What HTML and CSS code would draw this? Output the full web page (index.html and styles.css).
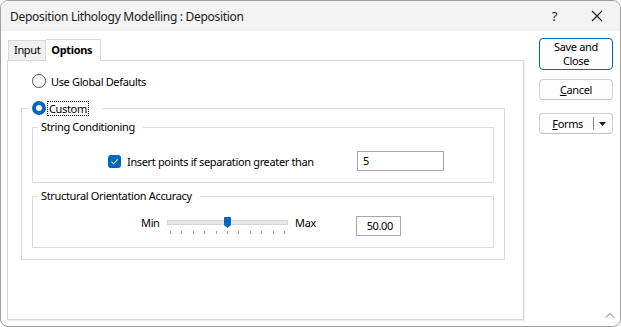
FILE: index.html
```html
<!DOCTYPE html>
<html lang="en">
<head>
  <meta charset="UTF-8">
  <title>Deposition Lithology Modelling : Deposition</title>
  <link rel="stylesheet" href="styles.css">
</head>
<body>
  <div class="window">
    <div class="titlebar">
      <span class="title">Deposition Lithology Modelling : Deposition</span>
      <span class="help">?</span>
      <svg class="close" width="12" height="12" viewBox="0 0 12 12">
        <path d="M1 1 L11 11 M11 1 L1 11" stroke="#1a1a1a" stroke-width="1.1" fill="none" />
      </svg>
    </div>

    <div class="client">
      <div class="form-area">
        <div class="tabs">
          <div class="tab">Input</div>
          <div class="tab active">Options</div>
        </div>

        <div class="panel">
          <label class="radio-row">
            <span class="radio"></span>
            <span>Use Global Defaults</span>
          </label>

          <fieldset class="group custom">
            <legend>
              <span class="radio checked"></span>
              <span class="focus">Custom</span>
            </legend>

            <fieldset class="group inner">
              <legend>String Conditioning</legend>
              <div class="row string-row">
                <label class="check-label">
                  <span class="checkbox">
                    <svg width="13" height="13" viewBox="0 0 13 13">
                      <path d="M3.5 6.8 L5.6 8.8 L9.6 4.4" stroke="#fff" stroke-width="1.1" fill="none" />
                    </svg>
                  </span>
                  <span>Insert points if separation greater than</span>
                </label>
                <div class="textbox wide">5</div>
              </div>
            </fieldset>

            <fieldset class="group inner struct">
              <legend>Structural Orientation Accuracy</legend>
              <div class="row slider-row">
                <span class="min-label">Min</span>
                <div class="slider">
                  <div class="track"></div>
                  <svg class="thumb" width="7" height="11" viewBox="0 0 7 11">
                    <path d="M0 1 Q0 0 1 0 H6 Q7 0 7 1 V8 L3.5 11 L0 8 Z" fill="#0067c0" />
                  </svg>
                  <div class="ticks">
                    <i></i><i></i><i></i><i></i><i></i><i></i><i></i><i></i><i></i><i></i><i></i>
                  </div>
                </div>
                <span class="max-label">Max</span>
                <div class="textbox small">50.00</div>
              </div>
            </fieldset>
          </fieldset>
        </div>
      </div>

      <div class="buttons">
        <button class="btn primary">Save and<br>Close</button>
        <button class="btn"><u>C</u>ancel</button>
        <button class="btn forms">
          <span class="forms-text"><u>F</u>orms</span>
          <span class="divider"></span>
          <svg width="7" height="4" viewBox="0 0 7 4"><path d="M0 0 H7 L3.5 4 Z" fill="#1a1a1a" /></svg>
        </button>
      </div>
    </div>

    <svg class="grip" width="10" height="6" viewBox="0 0 10 6">
      <path d="M1 5.5 L5 1.5 L9 5.5" stroke="#6a6a6a" stroke-width="1" fill="none" />
    </svg>
  </div>
</body>
</html>
```

FILE: styles.css
```css
* {
  box-sizing: border-box;
}
body {
  margin: 0;
  background: #fff;
  font-family: "Noto Sans", "Open Sans", sans-serif;
  font-size: 11px;
  letter-spacing: -0.35px;
  color: #000;
}
.window {
  position: relative;
  width: 621px;
  height: 327px;
  border: 1px solid #a0a0a0;
  border-radius: 8px;
  overflow: hidden;
  display: flex;
  flex-direction: column;
  background: #fff;
}
.titlebar {
  height: 30px;
  background: #f3f3f3;
  display: flex;
  align-items: center;
  padding-left: 9px;
  flex-shrink: 0;
}
.title {
  flex: 1;
  font-size: 12px;
  letter-spacing: -0.3px;
  color: #1a1a1a;
}
.help {
  font-size: 13px;
  margin-right: 34px;
  color: #1a1a1a;
}
.close {
  margin-right: 17px;
}
.client {
  display: flex;
  padding-left: 6px;
  flex: 1;
}
.form-area {
  width: 518px;
  padding-top: 7px;
}
.tabs {
  display: flex;
  align-items: flex-end;
  padding-left: 1px;
  height: 22px;
}
.tab {
  height: 20px;
  padding: 0 5px;
  line-height: 18px;
  background: #f0f0f0;
  border: 1px solid #d9d9d9;
  border-bottom: none;
}
.tab.active {
  height: 22px;
  padding: 0 8px 0 5px;
  font-weight: bold;
  background: #fff;
  border-left: none;
  line-height: 20px;
  margin-bottom: -1px;
  position: relative;
}
.panel {
  width: 517px;
  height: 260px;
  border: 1px solid #d9d9d9;
  box-shadow: 1px 1px 0 #ececec;
  padding-top: 12px;
}
.radio-row {
  display: flex;
  align-items: center;
  height: 16px;
  margin-left: 24px;
  gap: 5px;
}
.radio {
  width: 14px;
  height: 14px;
  border-radius: 50%;
  border: 1px solid #5f5f5f;
  background: #f7f7f7;
  flex-shrink: 0;
}
.radio.checked {
  border: 4px solid #0067c0;
  background: #fff;
}
.group {
  border: 1px solid #dcdcdc;
  padding: 0;
  margin: 0;
}
.group legend {
  height: 16px;
  line-height: 16px;
  padding: 0 8px 0 3px;
  margin-left: 5px;
}
.custom {
  margin: 11px 18px 0 13px;
  height: 160px;
}
.custom > legend {
  display: flex;
  align-items: center;
  gap: 2px;
  margin-left: 7px;
  padding: 0 14px 0 3px;
}
.focus {
  outline: 1px dotted #000;
  outline-offset: 0;
  padding: 0 1px;
  line-height: 13px;
}
.inner {
  margin: 3px 10px 0 10px;
}
.inner.struct {
  margin-top: 5px;
}
.row {
  display: flex;
  align-items: center;
  height: 20px;
}
.string-row {
  margin: 16px 0 11px 75px;
}
.check-label {
  width: 249px;
  display: flex;
  align-items: center;
  gap: 6px;
}
.checkbox {
  width: 13px;
  height: 13px;
  border-radius: 3px;
  background: #0067c0;
  display: flex;
}
.textbox {
  height: 20px;
  border: 1px solid #a8a8a8;
  background: #fff;
  line-height: 18px;
}
.textbox.wide {
  width: 87px;
  padding-left: 5px;
}
.textbox.small {
  width: 45px;
  text-align: right;
  padding-right: 7px;
}
.slider-row {
  margin: 12px 0 11px 108px;
  align-items: flex-start;
}
.min-label {
  width: 26px;
  line-height: 14px;
}
.slider {
  position: relative;
  width: 121px;
  height: 20px;
}
.track {
  margin-top: 4px;
  height: 5px;
  background: #e7e7e7;
  border: 1px solid #d6d6d6;
}
.thumb {
  position: absolute;
  left: 57px;
  top: 1px;
}
.ticks {
  display: flex;
  justify-content: space-between;
  padding: 0 3px;
  margin-top: 6px;
}
.ticks i {
  width: 1px;
  height: 3px;
  background: #a0a0a0;
}
.max-label {
  width: 61px;
  margin-left: 7px;
  line-height: 14px;
}
.buttons {
  display: flex;
  flex-direction: column;
  margin-left: 14px;
  padding-top: 7px;
  width: 74px;
}
.btn {
  font-family: inherit;
  font-size: 11px;
  letter-spacing: -0.35px;
  color: #000;
  background: #fdfdfd;
  border: 1px solid #d0d0d0;
  border-bottom-color: #c0c0c0;
  border-radius: 4px;
  height: 21px;
  padding: 0;
  line-height: 14px;
}
.btn.primary {
  height: 32px;
  border: 1px solid #0067c0;
  line-height: 14px;
  margin-bottom: 9px;
}
.btn.forms {
  margin-top: 13px;
  display: flex;
  align-items: center;
  justify-content: flex-end;
  padding-right: 6px;
}
.divider {
  width: 1px;
  height: 13px;
  background: #8a8a8a;
  margin: 0 5px 0 10px;
}
.grip {
  position: absolute;
  right: 5px;
  bottom: 8px;
}
```
